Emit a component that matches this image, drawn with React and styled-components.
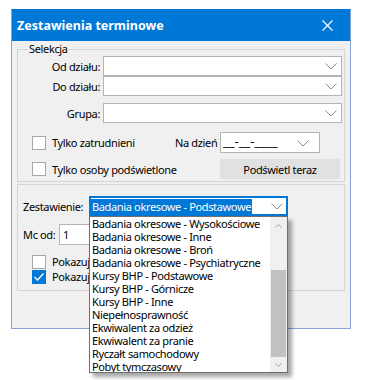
import styled, { createGlobalStyle } from "styled-components";

const GlobalStyle = createGlobalStyle`
  body {
    margin: 0;
    background: #ffffff;
    font-family: "Noto Sans", "Open Sans", sans-serif;
    font-size: 11px;
    letter-spacing: -0.35px;
    color: #000;
  }
  * { box-sizing: border-box; }
`;

const Page = styled.div`
  padding: 9px 0 0 11px;
  width: 378px;
  height: 380px;
`;

const Window = styled.div`
  width: 340px;
  height: 320px;
  border: 1px solid #86a4d6;
  border-top-color: #0078d7;
  display: flex;
  flex-direction: column;
  background: #f0f0f0;
`;

const TitleBar = styled.div`
  height: 31px;
  background: #0078d7;
  color: #fff;
  display: flex;
  align-items: center;
  justify-content: space-between;
  padding: 0 17px 0 5px;
  font-weight: 700;
  font-size: 12.5px;
  letter-spacing: 0;
`;

const Body = styled.div`
  flex: 1;
  padding: 8px 5px 0 5px;
`;

const Group = styled.div`
  position: relative;
  border: 1px solid #d5d5d5;
  height: ${(p) => p.$h}px;
  margin-top: ${(p) => p.$mt || 0}px;
  padding: ${(p) => p.$pad};
`;

const Legend = styled.span`
  position: absolute;
  top: -9px;
  left: 10px;
  padding: 0 1px;
  background: #f0f0f0;
  line-height: 16px;
`;

const FieldRow = styled.div`
  display: grid;
  grid-template-columns: 82px 1fr;
  column-gap: 3px;
  align-items: center;
  margin-top: ${(p) => p.$mt || 0}px;
`;

const Label = styled.span`
  text-align: ${(p) => p.$align || "right"};
  width: ${(p) => (p.$w ? p.$w + "px" : "auto")};
  flex: none;
  white-space: nowrap;
`;

const Combo = styled.div`
  height: ${(p) => p.$h || 20}px;
  width: ${(p) => (p.$w ? p.$w + "px" : "auto")};
  background: #fff;
  border: 1px solid #b4b4b4;
  display: flex;
  align-items: center;
  justify-content: space-between;
  padding: 0 4px 0 2px;
`;

const Chevron = ({ color = "#8a8a8a" }) => (
  <svg width="12" height="7" viewBox="0 0 12 7">
    <polyline points="0.5,0.5 6,6 11.5,0.5" fill="none" stroke={color} strokeWidth="1" />
  </svg>
);

const Options = styled.div`
  display: grid;
  grid-template-columns: 143px 45px auto;
  grid-template-rows: 21px 20px;
  row-gap: 6px;
  align-items: center;
  margin-top: 9px;
  padding-left: 14px;
`;

const Check = styled.label`
  display: flex;
  align-items: center;
  gap: 6px;
  grid-column: ${(p) => p.$span || "auto"};
  white-space: nowrap;
`;

const CheckText = styled.span`
  max-width: ${(p) => (p.$clip ? p.$clip + "px" : "none")};
  overflow: hidden;
`;

const Box = styled.span`
  width: 14px;
  height: 14px;
  flex: none;
  border: 1px solid ${(p) => (p.$checked ? "#0078d7" : "#a6a6a6")};
  background: ${(p) => (p.$checked ? "#0078d7" : "#fff")};
  display: flex;
  align-items: center;
  justify-content: center;
`;

const DateText = styled.span`
  font-size: 13px;
  letter-spacing: 0;
  line-height: 14px;
  margin-top: -4px;
`;

const Button = styled.div`
  width: 120px;
  height: 20px;
  background: #e1e1e1;
  display: flex;
  align-items: center;
  justify-content: center;
`;

const Row = styled.div`
  display: flex;
  align-items: center;
  margin-top: ${(p) => p.$mt || 0}px;
  padding-left: ${(p) => p.$pl || 0}px;
  height: ${(p) => (p.$h ? p.$h + "px" : "auto")};
`;

const SelectWrap = styled.div`
  position: relative;
  width: 199px;
  height: 20px;
`;

const Select = styled.div`
  height: 20px;
  border: 2px solid #0078d7;
  background: #fff;
  display: flex;
  align-items: center;
  justify-content: space-between;
  padding: 0 3px 0 0;
`;

const Selected = styled.span`
  background: #0078d7;
  color: #fff;
  line-height: 15px;
  padding: 0 1px;
`;

const DropList = styled.div`
  position: absolute;
  top: 20px;
  left: 0;
  width: 199px;
  height: 157px;
  background: #fff;
  border: 1px solid #6e6e6e;
  box-shadow: 4px 4px 4px rgba(0, 0, 0, 0.35);
  display: flex;
  z-index: 10;
`;

const Items = styled.ul`
  list-style: none;
  margin: 0;
  padding: 0 0 0 2px;
  flex: 1;
  overflow: hidden;
`;

const Item = styled.li`
  line-height: 13px;
  height: 13px;
  white-space: nowrap;
`;

const ScrollBar = styled.div`
  width: 17px;
  background: #f0f0f0;
  display: flex;
  flex-direction: column;
`;

const ScrollBtn = styled.div`
  height: ${(p) => p.$h}px;
  display: flex;
  align-items: center;
  justify-content: center;
`;

const Track = styled.div`
  flex: 1;
  display: flex;
  flex-direction: column;
  justify-content: flex-end;
`;

const Thumb = styled.div`
  height: 87px;
  margin: 0 1px;
  background: #c1c1c1;
`;

const Spin = styled.div`
  height: 21px;
  width: 50px;
  background: #fff;
  border: 1px solid #b4b4b4;
  display: flex;
  align-items: center;
  padding-left: 3px;
`;

const SpinBtns = styled.div`
  margin-left: auto;
  width: 18px;
  height: 100%;
  background: #e6e6e6;
  display: flex;
  flex-direction: column;
  align-items: center;
  justify-content: center;
  gap: 2px;
`;

const items = [
  "Badania okresowe - Wysokościowe",
  "Badania okresowe - Inne",
  "Badania okresowe - Broń",
  "Badania okresowe - Psychiatryczne",
  "Kursy BHP - Podstawowe",
  "Kursy BHP - Górnicze",
  "Kursy BHP - Inne",
  "Niepełnosprawność",
  "Ekwiwalent za odzież",
  "Ekwiwalent za pranie",
  "Ryczałt samochodowy",
  "Pobyt tymczasowy",
];

const SmallArrow = ({ up, color = "#a3a3a3" }) => (
  <svg width="7" height="4" viewBox="0 0 7 4">
    <polyline
      points={up ? "0.5,3.5 3.5,0.5 6.5,3.5" : "0.5,0.5 3.5,3.5 6.5,0.5"}
      fill="none"
      stroke={color}
      strokeWidth="1"
    />
  </svg>
);

const Tri = ({ up }) => (
  <svg width="7" height="4" viewBox="0 0 7 4">
    <polygon points={up ? "0,4 3.5,0 7,4" : "0,0 3.5,4 7,0"} fill="#000" />
  </svg>
);

export default function App() {
  return (
    <Page>
      <GlobalStyle />
      <Window>
        <TitleBar>
          <span>Zestawienia terminowe</span>
          <svg width="11" height="11" viewBox="0 0 11 11">
            <path d="M0.5 0.5 L10.5 10.5 M10.5 0.5 L0.5 10.5" stroke="#fff" strokeWidth="1.1" />
          </svg>
        </TitleBar>
        <Body>
          <Group $h={133} $mt={0} $pad="6px 2px 0 0">
            <Legend>Selekcja</Legend>
            <FieldRow>
              <Label>Od działu:</Label>
              <Combo><span /><Chevron /></Combo>
            </FieldRow>
            <FieldRow>
              <Label>Do działu:</Label>
              <Combo><span /><Chevron /></Combo>
            </FieldRow>
            <FieldRow $mt={7}>
              <Label>Grupa:</Label>
              <Combo><span /><Chevron /></Combo>
            </FieldRow>
            <Options>
              <Check>
                <Box />
                <CheckText>Tylko zatrudnieni</CheckText>
              </Check>
              <Label $align="left">Na dzień</Label>
              <Combo $h={21} $w={100}>
                <DateText>__-__-____</DateText>
                <span style={{ marginRight: 6 }}><Chevron /></span>
              </Combo>
              <Check $span="1 / span 2">
                <Box />
                <CheckText>Tylko osoby podświetlone</CheckText>
              </Check>
              <Button>Podświetl teraz</Button>
            </Options>
          </Group>
          <Group $h={107} $mt={2} $pad="11px 0 0 5px">
            <Row>
              <Label $align="left" $w={66}>Zestawienie:</Label>
              <SelectWrap>
                <Select>
                  <Selected>Badania okresowe - Podstawowe</Selected>
                  <Chevron />
                </Select>
                <DropList>
                  <Items>
                    {items.map((t) => (
                      <Item key={t}>{t}</Item>
                    ))}
                  </Items>
                  <ScrollBar>
                    <ScrollBtn $h={17}><SmallArrow up /></ScrollBtn>
                    <Track><Thumb /></Track>
                    <ScrollBtn $h={15}><SmallArrow /></ScrollBtn>
                  </ScrollBar>
                </DropList>
              </SelectWrap>
            </Row>
            <Row $mt={8}>
              <Label $align="left" $w={36}>Mc od:</Label>
              <Spin>
                1
                <SpinBtns>
                  <Tri up />
                  <Tri />
                </SpinBtns>
              </Spin>
            </Row>
            <Row $mt={9} $pl={9} $h={15}>
              <Check>
                <Box />
                <CheckText $clip={37}>Pokazuj tylko przeterminowane</CheckText>
              </Check>
            </Row>
            <Row $pl={9} $h={15}>
              <Check>
                <Box $checked>
                  <svg width="10" height="8" viewBox="0 0 10 8">
                    <polyline points="0.5,4 3.5,7 9.5,0.5" fill="none" stroke="#fff" strokeWidth="1.3" />
                  </svg>
                </Box>
                <CheckText $clip={37}>Pokazuj wszystkie terminy</CheckText>
              </Check>
            </Row>
          </Group>
        </Body>
      </Window>
    </Page>
  );
}
